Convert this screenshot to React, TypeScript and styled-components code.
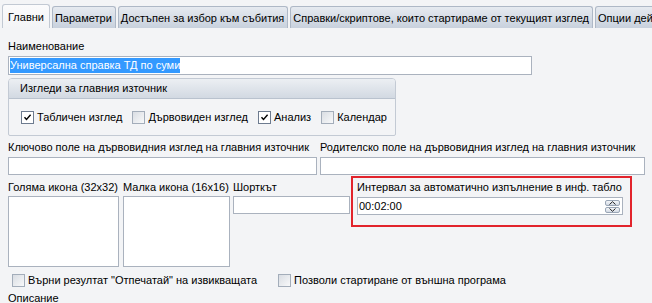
import React from 'react';
import styled, { createGlobalStyle } from 'styled-components';

const FONT = '"Liberation Sans", Arial, sans-serif';

const Global = createGlobalStyle`
  html, body {
    margin: 0;
    background: #f3f4f6;
    overflow: hidden;
  }
  body {
    font-family: ${FONT};
    font-size: 11px;
    color: #000;
  }
`;

const Page = styled.div`
  width: 652px;
  height: 303px;
  overflow: hidden;
`;

const TabBar = styled.div`
  display: flex;
  align-items: flex-end;
  height: 28px;
  padding-left: 2px;
  gap: 2px;
  white-space: nowrap;
  overflow: hidden;
`;

const Tab = styled.div<{ $active?: boolean }>`
  flex: none;
  box-sizing: border-box;
  display: flex;
  align-items: center;
  height: ${p => (p.$active ? '24px' : '22px')};
  padding: ${p => (p.$active ? '1px 5px 0 5px' : '1px 3px 0 2px')};
  border: 1px solid ${p => (p.$active ? '#c2c9d3' : '#aeb8c6')};
  border-bottom: none;
  border-radius: 3px 3px 0 0;
  background: ${p =>
    p.$active
      ? 'linear-gradient(#fbfbfc, #f3f4f6)'
      : 'linear-gradient(#e6eaf0, #c8d1dd)'};
`;

const Content = styled.div`
  padding: 0 8px;
`;

const Label = styled.div`
  height: 13px;
  line-height: 13px;
  white-space: nowrap;
`;

const TextBox = styled.div<{ $w?: number; $h?: number }>`
  box-sizing: border-box;
  display: flex;
  align-items: center;
  width: ${p => (p.$w ? `${p.$w}px` : '100%')};
  height: ${p => p.$h ?? 18}px;
  margin-top: 3px;
  padding: 0 1px;
  background: #fff;
  border: 1px solid #aab2be;
  white-space: nowrap;
  overflow: hidden;
`;

const Selected = styled.span`
  background: #3399ff;
  color: #fff;
  line-height: 15px;
`;

const NameLabel = styled(Label)`
  margin-top: 12px;
`;

const Group = styled.div`
  box-sizing: border-box;
  width: 388px;
  height: 58px;
  margin-top: 3px;
  border: 1px solid #c3cad4;
  border-radius: 4px 4px 2px 2px;
  display: flex;
  flex-direction: column;
`;

const GroupHeader = styled.div`
  height: 19px;
  line-height: 19px;
  padding-left: 11px;
  border-bottom: 1px solid #b9c2ce;
  border-radius: 3px 3px 0 0;
  background: linear-gradient(#eceff3, #d2d9e2);
`;

const CheckRow = styled.div`
  flex: 1;
  display: flex;
  align-items: center;
  gap: 10px;
  padding-left: 12px;
  white-space: nowrap;
`;

const CheckItem = styled.label<{ $w?: number }>`
  display: flex;
  align-items: center;
  gap: 3px;
  ${p => (p.$w ? `width: ${p.$w}px;` : '')}
`;

const Box = styled.span<{ $checked?: boolean }>`
  box-sizing: border-box;
  width: 13px;
  height: 13px;
  display: inline-flex;
  align-items: center;
  justify-content: center;
  border: 1px solid ${p => (p.$checked ? '#6d7b8f' : '#a3adba')};
  background: ${p =>
    p.$checked ? '#fff' : 'linear-gradient(135deg, #d9dde3, #f8f9fa)'};
`;

const TwoCols = styled.div`
  display: grid;
  grid-template-columns: 309px 325px;
  column-gap: 3px;
  margin-top: 5px;
`;

const IconsRow = styled.div`
  display: flex;
  align-items: flex-start;
  margin-top: 6px;
`;

const Col = styled.div<{ $w: number; $gap?: number }>`
  width: ${p => p.$w}px;
  margin-right: ${p => p.$gap ?? 0}px;
  flex: none;
`;

const ImageBox = styled.div<{ $w: number }>`
  box-sizing: border-box;
  width: ${p => p.$w}px;
  height: 71px;
  margin-top: 2px;
  background: #fff;
  border: 1px solid #aab2be;
`;

const Highlighted = styled.div`
  position: relative;
  &::after {
    content: '';
    position: absolute;
    left: -6px;
    right: -9px;
    top: -5px;
    bottom: -12px;
    border: 2px solid #e2242c;
    pointer-events: none;
  }
`;

const Spin = styled.div`
  margin-left: auto;
  margin-right: 1px;
  display: flex;
  flex-direction: column;
  gap: 1px;
`;

const SpinBtn = styled.div`
  box-sizing: border-box;
  width: 15px;
  height: 6px;
  border: 1px solid #9aa6b6;
  border-radius: 2px;
  background: linear-gradient(#f4f6f9, #d3dae4);
  display: flex;
  align-items: center;
  justify-content: center;
`;

const BottomChecks = styled.div`
  display: flex;
  align-items: center;
  height: 14px;
  margin-top: 6px;
  padding-left: 4px;
  white-space: nowrap;
`;

const DescLabel = styled(Label)`
  margin-top: 5px;
`;

const Check = ({ checked, children, w }: { checked?: boolean; children: React.ReactNode; w?: number }) => (
  <CheckItem $w={w}>
    <Box $checked={checked}>
      {checked && (
        <svg width="9" height="9" viewBox="0 0 9 9">
          <path d="M1.5 4.2 L3.5 6.4 L7.6 1.8" fill="none" stroke="#000" strokeWidth="1.4" />
        </svg>
      )}
    </Box>
    <span>{children}</span>
  </CheckItem>
);

const Chevron = ({ up }: { up?: boolean }) => (
  <svg width="7" height="4" viewBox="0 0 7 4">
    <path d={up ? 'M0.5 3.5 L3.5 0.7 L6.5 3.5' : 'M0.5 0.5 L3.5 3.3 L6.5 0.5'} fill="none" stroke="#222" strokeWidth="1" />
  </svg>
);

const tabs = [
  'Главни',
  'Параметри',
  'Достъпен за избор към събития',
  'Справки/скриптове, които стартираме от текущият изглед',
  'Опции дейности',
];

export default function App() {
  return (
    <Page>
      <Global />
      <TabBar>
        {tabs.map((t, i) => (
          <Tab key={t} $active={i === 0}>
            {t}
          </Tab>
        ))}
      </TabBar>
      <Content>
        <NameLabel>Наименование</NameLabel>
        <TextBox $w={524} $h={19}>
          <Selected>Универсална справка ТД по суми</Selected>
        </TextBox>

        <Group>
          <GroupHeader>Изгледи за главния източник</GroupHeader>
          <CheckRow>
            <Check checked>Табличен изглед</Check>
            <Check>Дървовиден изглед</Check>
            <Check checked>Анализ</Check>
            <Check>Календар</Check>
          </CheckRow>
        </Group>

        <TwoCols>
          <div>
            <Label>Ключово поле на дървовидния изглед на главния източник</Label>
            <TextBox />
          </div>
          <div>
            <Label>Родителско поле на дървовидния изглед на главния източник</Label>
            <TextBox />
          </div>
        </TwoCols>

        <IconsRow>
          <Col $w={115}>
            <Label>Голяма икона (32x32)</Label>
            <ImageBox $w={111} />
          </Col>
          <Col $w={110}>
            <Label>Малка икона (16x16)</Label>
            <ImageBox $w={107} />
          </Col>
          <Col $w={117} $gap={7}>
            <Label>Шорткът</Label>
            <TextBox $w={117} style={{ marginTop: 2 }} />
          </Col>
          <Col $w={266}>
            <Highlighted>
              <Label>Интервал за автоматично изпълнение в инф. табло</Label>
              <TextBox $w={266}>
                <span>00:02:00</span>
                <Spin>
                  <SpinBtn><Chevron up /></SpinBtn>
                  <SpinBtn><Chevron /></SpinBtn>
                </Spin>
              </TextBox>
            </Highlighted>
          </Col>
        </IconsRow>

        <BottomChecks>
          <Check w={266}>Върни резултат "Отпечатай" на извикващата</Check>
          <Check>Позволи стартиране от външна програма</Check>
        </BottomChecks>
        <DescLabel>Описание</DescLabel>
      </Content>
    </Page>
  );
}
